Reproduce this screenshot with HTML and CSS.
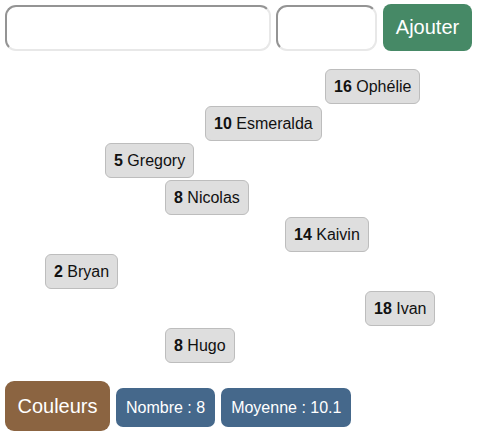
FILE: index.html
```html
<!DOCTYPE html>
<html lang="fr">
<head>
<meta charset="utf-8">
<title>Notes</title>
<link rel="stylesheet" href="styles.css">
</head>
<body>
<div class="form-row">
  <input class="field field-name" type="text">
  <input class="field field-score" type="text">
  <button class="btn btn-add">Ajouter</button>
</div>
<div class="list">
  <div class="row"><span class="chip" style="margin-left:320px"><b>16</b> Ophélie</span></div>
  <div class="row"><span class="chip" style="margin-left:200px"><b>10</b> Esmeralda</span></div>
  <div class="row"><span class="chip" style="margin-left:100px"><b>5</b> Gregory</span></div>
  <div class="row"><span class="chip" style="margin-left:160px"><b>8</b> Nicolas</span></div>
  <div class="row"><span class="chip" style="margin-left:280px"><b>14</b> Kaivin</span></div>
  <div class="row"><span class="chip" style="margin-left:40px"><b>2</b> Bryan</span></div>
  <div class="row"><span class="chip" style="margin-left:360px"><b>18</b> Ivan</span></div>
  <div class="row"><span class="chip" style="margin-left:160px"><b>8</b> Hugo</span></div>
</div>
<div class="footer">
  <button class="btn btn-colors">Couleurs</button>
  <span class="stat">Nombre : 8</span>
  <span class="stat">Moyenne : 10.1</span>
</div>
</body>
</html>
```

FILE: styles.css
```css
* { box-sizing: border-box; }
body {
  margin: 4px 5px;
  font-family: "Liberation Sans", Arial, sans-serif;
  background: #fff;
  color: #111;
}
.form-row {
  display: flex;
  align-items: flex-end;
  height: 47px;
}
.field {
  height: 46px;
  border-width: 2px;
  border-style: solid;
  border-top-color: #949494;
  border-left-color: #949494;
  border-bottom-color: #e8e8e8;
  border-right-color: #e8e8e8;
  border-radius: 11px;
  background: #fff;
  padding: 0 8px;
  font: 16px "Liberation Sans", Arial, sans-serif;
  outline: none;
}
.field-name { width: 266px; }
.field-score { width: 101px; margin-left: 5px; }
.btn {
  border: none;
  color: #fff;
  font-family: "Liberation Sans", Arial, sans-serif;
  font-size: 20px;
  cursor: pointer;
}
.btn-add {
  width: 89px;
  height: 47px;
  margin-left: 6px;
  background: #468966;
  border-radius: 8px;
  padding: 0;
}
.list {
  margin-top: 18px;
}
.row {
  height: 37px;
}
.chip {
  display: inline-block;
  height: 35px;
  padding: 7px 8px 0;
  line-height: 19px;
  font-size: 16px;
  background: #dedede;
  border: 1px solid #bdbdbd;
  border-radius: 6px;
  color: #111;
}
.chip b { font-weight: bold; }
.footer {
  margin-top: 16px;
  display: flex;
  align-items: baseline;
  gap: 6px;
}
.btn-colors {
  width: 105px;
  height: 50px;
  background: #8b6441;
  border-radius: 9px;
  padding: 0;
  line-height: 50px;
}
.stat {
  display: inline-block;
  height: 39px;
  line-height: 39px;
  padding: 0 10px;
  background: #45688b;
  color: #fff;
  font-size: 16px;
  border-radius: 7px;
}
```
